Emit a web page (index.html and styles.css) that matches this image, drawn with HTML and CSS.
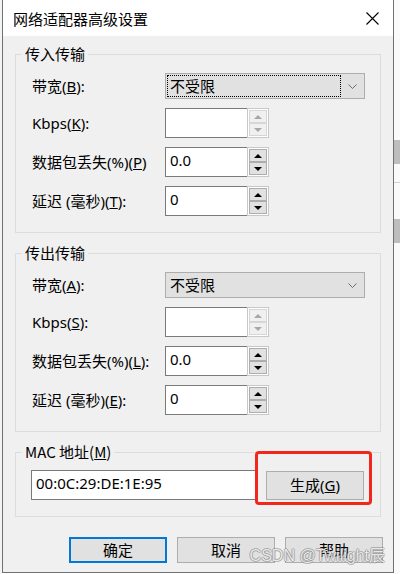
FILE: index.html
```html
<!DOCTYPE html>
<html lang="zh-CN">
<head>
    <meta charset="UTF-8">
    <title>网络适配器高级设置</title>
    <link rel="stylesheet" href="styles.css">
</head>
<body>
    <div class="edgeLeft"></div>

    <div class="dialog">
        <div class="titlebar">
            <span class="title">网络适配器高级设置</span>
            <svg class="close" width="13" height="13" viewBox="0 0 13 13">
                <path d="M0.5 0.5 L12.5 12.5 M12.5 0.5 L0.5 12.5" stroke="#000" stroke-width="1.1" fill="none"/>
            </svg>
        </div>

        <div class="content">
            <fieldset class="group">
                <legend>传入传输</legend>
                <div class="rows">
                    <div class="row">
                        <label>带宽(<u>B</u>):</label>
                        <div class="select">
                            <span class="selectValue focused">不受限</span>
                            <span class="chevron"><svg width="9" height="5" viewBox="0 0 9 5"><path d="M0.5 0.5 L4.5 4.5 L8.5 0.5" stroke="#6d6d6d" fill="none"/></svg></span>
                        </div>
                    </div>
                    <div class="row">
                        <label>Kbps(<u>K</u>):</label>
                        <div class="spin disabled">
                            <div class="spinInput"></div>
                            <div class="spinButtons"><span class="spinBtn up"></span><span class="spinBtn down"></span></div>
                        </div>
                    </div>
                    <div class="row">
                        <label>数据包丢失(%)(<u>P</u>)</label>
                        <div class="spin">
                            <div class="spinInput">0.0</div>
                            <div class="spinButtons"><span class="spinBtn up"></span><span class="spinBtn down"></span></div>
                        </div>
                    </div>
                    <div class="row">
                        <label>延迟 (毫秒)(<u>T</u>):</label>
                        <div class="spin">
                            <div class="spinInput">0</div>
                            <div class="spinButtons"><span class="spinBtn up"></span><span class="spinBtn down"></span></div>
                        </div>
                    </div>
                </div>
            </fieldset>

            <fieldset class="group">
                <legend>传出传输</legend>
                <div class="rows">
                    <div class="row">
                        <label>带宽(<u>A</u>):</label>
                        <div class="select">
                            <span class="selectValue">不受限</span>
                            <span class="chevron"><svg width="9" height="5" viewBox="0 0 9 5"><path d="M0.5 0.5 L4.5 4.5 L8.5 0.5" stroke="#6d6d6d" fill="none"/></svg></span>
                        </div>
                    </div>
                    <div class="row">
                        <label>Kbps(<u>S</u>):</label>
                        <div class="spin disabled">
                            <div class="spinInput"></div>
                            <div class="spinButtons"><span class="spinBtn up"></span><span class="spinBtn down"></span></div>
                        </div>
                    </div>
                    <div class="row">
                        <label>数据包丢失(%)(<u>L</u>):</label>
                        <div class="spin">
                            <div class="spinInput">0.0</div>
                            <div class="spinButtons"><span class="spinBtn up"></span><span class="spinBtn down"></span></div>
                        </div>
                    </div>
                    <div class="row">
                        <label>延迟 (毫秒)(<u>E</u>):</label>
                        <div class="spin">
                            <div class="spinInput">0</div>
                            <div class="spinButtons"><span class="spinBtn up"></span><span class="spinBtn down"></span></div>
                        </div>
                    </div>
                </div>
            </fieldset>

            <fieldset class="group macGroup">
                <legend>MAC 地址(<u>M</u>)</legend>
                <div class="macRow">
                    <div class="macInput">00:0C:29:DE:1E:95</div>
                    <span class="marked"><button class="btn generate">生成(<u>G</u>)</button></span>
                </div>
            </fieldset>

            <div class="actions">
                <button class="btn default">确定</button>
                <button class="btn">取消</button>
                <button class="btn">帮助</button>
                <span class="watermark">CSDN @Twilight辰</span>
            </div>
        </div>
    </div>

    <div class="edgeRight">
        <div class="bgBar"></div>
        <div class="bgLine"></div>
        <div class="bgBar second"></div>
    </div>
</body>
</html>
```

FILE: styles.css
```css
body {
    margin: 0;
    display: flex;
    height: 574px;
    background-color: #ffffff;
    font-family: 'Noto Sans', 'Noto Sans CJK SC', sans-serif;
    font-size: 15px;
    color: #000000;
    overflow: hidden;
}
.edgeLeft {
    width: 2px;
    background-color: #f4f4f4;
}
.dialog {
    width: 392px;
    height: 573px;
    box-sizing: border-box;
    border: 1px solid #707070;
    border-top: none;
    background-color: #f0f0f0;
    display: flex;
    flex-direction: column;
}
.titlebar {
    height: 36px;
    background-color: #ffffff;
    display: flex;
    align-items: center;
    justify-content: space-between;
    padding: 0 14px 0 10px;
}
.title {
    font-family: 'Noto Sans CJK SC', sans-serif;
    font-size: 15px;
    line-height: 20px;
    margin-top: 1px;
}
.close {
    display: block;
    margin-top: 1px;
}
.content {
    padding: 8px 12px 0 12px;
}
.group {
    margin: 0 0 10px 0;
    border: 1px solid #dcdcdc;
    padding: 9px 12px 16px 6px;
    min-width: 0;
}
.group legend {
    padding: 0 3px;
    line-height: 20px;
    font-family: 'Noto Sans CJK SC', sans-serif;
}
.rows {
    display: flex;
    flex-direction: column;
    gap: 9px;
    padding-left: 10px;
}
.row {
    display: flex;
    align-items: center;
}
.row label {
    width: 133px;
    line-height: 20px;
    white-space: nowrap;
}
.select {
    width: 200px;
    height: 26px;
    box-sizing: border-box;
    border: 1px solid #adadad;
    background-color: #e1e1e1;
    display: flex;
    padding: 1px;
}
.selectValue {
    flex: 1;
    border: 1px solid transparent;
    padding-left: 2px;
    line-height: 20px;
    font-family: 'Noto Sans CJK SC', sans-serif;
}
.selectValue.focused {
    border: 1px dotted #000000;
}
.chevron {
    width: 22px;
    display: flex;
    align-items: center;
    justify-content: center;
}
.spin {
    display: flex;
    height: 30px;
}
.spinInput {
    width: 82px;
    box-sizing: border-box;
    border: 1px solid #7a7a7a;
    border-right: none;
    background-color: #ffffff;
    padding: 2px 0 0 4px;
    line-height: 20px;
}
.spinButtons {
    width: 22px;
    box-sizing: border-box;
    border: 1px solid #c8c8c8;
    background-color: #ffffff;
    padding: 1px;
    display: flex;
    flex-direction: column;
}
.spinBtn {
    flex: 1;
    border: 1px solid #adadad;
    background-color: #e1e1e1;
    display: flex;
    align-items: center;
    justify-content: center;
}
.spinBtn::before {
    content: '';
    border-left: 4px solid transparent;
    border-right: 4px solid transparent;
}
.spinBtn.up::before {
    border-bottom: 4px solid #000000;
}
.spinBtn.down::before {
    border-top: 4px solid #000000;
}
.spin.disabled .spinBtn {
    border-color: #d6d6d6;
    background-color: #f0f0f0;
}
.spin.disabled .spinBtn.up::before {
    border-bottom-color: #a8a8a8;
}
.spin.disabled .spinBtn.down::before {
    border-top-color: #a8a8a8;
}
.macGroup {
    padding-top: 8px;
    padding-bottom: 16px;
}
.macRow {
    display: flex;
    align-items: center;
    gap: 9px;
    padding-left: 9px;
}
.macInput {
    width: 226px;
    height: 30px;
    box-sizing: border-box;
    border: 1px solid #7a7a7a;
    background-color: #ffffff;
    padding: 2px 0 0 4px;
    line-height: 20px;
}
.marked {
    position: relative;
    display: flex;
}
.marked::after {
    content: '';
    position: absolute;
    top: -20px;
    left: -11px;
    right: -8px;
    bottom: -5px;
    border: 3px solid #f3261c;
    border-radius: 4px;
}
.btn {
    width: 98px;
    height: 26px;
    box-sizing: border-box;
    border: 1px solid #adadad;
    background-color: #e1e1e1;
    font-family: 'Noto Sans', 'Noto Sans CJK SC', sans-serif;
    font-size: 15px;
    color: #000000;
    padding: 0;
    line-height: 20px;
}
.btn.default {
    border: 2px solid #0078d7;
}
.generate {
    height: 29px;
}
.actions {
    position: relative;
    display: flex;
    justify-content: flex-end;
    gap: 10px;
    margin-top: 20px;
    margin-right: -2px;
}
.watermark {
    position: absolute;
    right: -2px;
    top: 10px;
    font-family: 'Liberation Sans', 'Noto Sans CJK SC', sans-serif;
    font-size: 16px;
    line-height: 18px;
    color: rgba(250, 250, 250, 0.85);
    text-shadow: 1px 0 0 rgba(110, 110, 110, 0.45), -1px 0 0 rgba(110, 110, 110, 0.45), 0 1px 0 rgba(110, 110, 110, 0.45), 0 -1px 0 rgba(110, 110, 110, 0.45);
    pointer-events: none;
}
.edgeRight {
    flex: 1;
    background-color: #fafafa;
    padding-top: 140px;
}
.bgBar {
    height: 24px;
    background-color: #bdbdbd;
}
.bgLine {
    height: 1px;
    margin-top: 18px;
    background-color: #d0d0d0;
}
.bgBar.second {
    margin-top: 36px;
}
```
